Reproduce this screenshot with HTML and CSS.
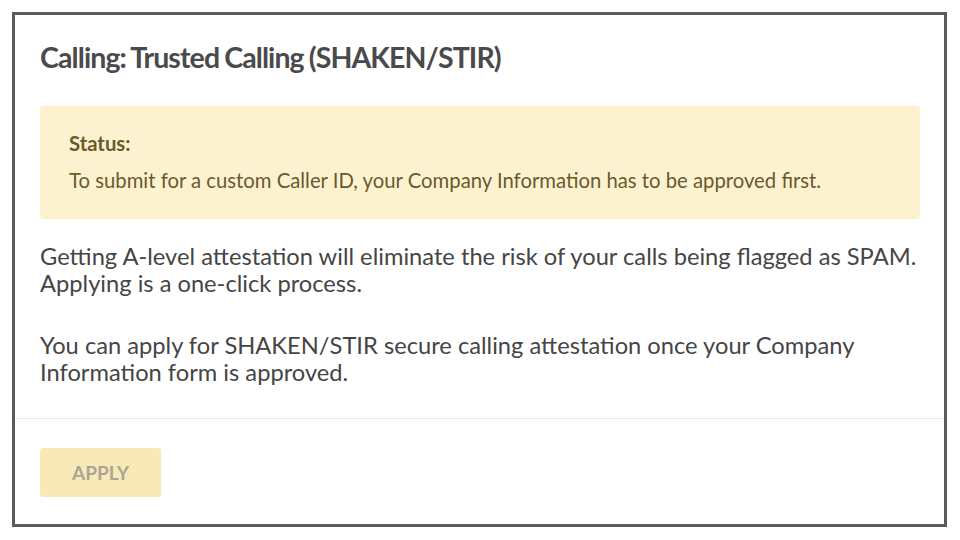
FILE: index.html
```html
<!DOCTYPE html>
<html lang="en">
<head>
    <meta charset="UTF-8">
    <title>Trusted Calling</title>
    <link rel="stylesheet" href="styles.css">
</head>
<body>
    <div class="panel">
        <div class="panel-body">
            <h2 class="panel-title">Calling: Trusted Calling (SHAKEN/STIR)</h2>

            <div class="status-box">
                <div class="status-label">Status:</div>
                <div class="status-text">To submit for a custom Caller ID, your Company Information has to be approved first.</div>
            </div>

            <p>Getting A-level attestation will eliminate the risk of your calls being flagged as SPAM. Applying is a one-click process.</p>
            <p>You can apply for SHAKEN/STIR secure calling attestation once your Company Information form is approved.</p>
        </div>

        <div class="panel-footer">
            <button class="btn-apply" disabled>APPLY</button>
        </div>
    </div>
</body>
</html>
```

FILE: styles.css
```css
body {
    font-family: Lato, 'Noto Sans', sans-serif;
    background: #fff;
    margin: 0;
    padding: 12px 13px 13px 12px;
}

.panel {
    border: 3px solid #5b5b5b;
    background: #fff;
    height: 509px;
    display: flex;
    flex-direction: column;
}

.panel-body {
    padding: 24px 24px 0 25px;
    flex: 1;
}

.panel-title {
    font-size: 28.5px;
    font-weight: 700;
    letter-spacing: -0.9px;
    word-spacing: -1px;
    color: #4a4a4c;
    margin: 0 0 31px;
    line-height: 36px;
}

.status-box {
    background: #fdf2d0;
    border-radius: 4px;
    padding: 24px 29px 26px 29px;
    color: #6a5a2c;
    font-size: 20.3px;
    margin-bottom: 24px;
}

.status-label {
    font-weight: 700;
    line-height: 26px;
    margin-bottom: 11px;
}

.status-text {
    line-height: 26px;
}

p {
    font-size: 23.7px;
    line-height: 27px;
    color: #454545;
    margin: 0 0 35px;
}

p:last-child {
    margin-bottom: 0;
}

.panel-footer {
    display: flex;
    border-top: 1px solid #e8e8e8;
    padding: 29px 25px 27px;
}

.btn-apply {
    font-family: Lato, 'Noto Sans', sans-serif;
    font-size: 19px;
    font-weight: 700;
    color: #aba596;
    background: #f8e9b6;
    border: none;
    border-radius: 3px;
    width: 121px;
    height: 49px;
    padding: 0;
}
```
